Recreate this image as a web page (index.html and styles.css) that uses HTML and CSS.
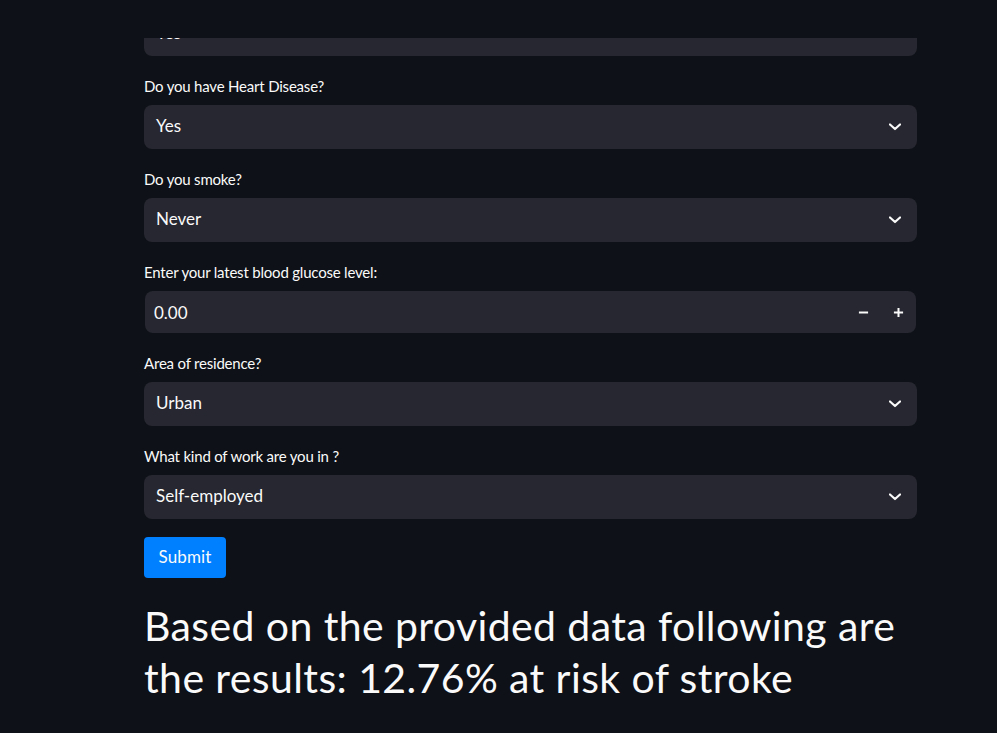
FILE: index.html
```html
<!DOCTYPE html>
<html>
<head>
<meta charset="utf-8">
<link rel="stylesheet" href="styles.css">
</head>
<body>
<div class="topbar"></div>
<main class="main">
  <div class="widget first">
    <div class="select"><span>Yes</span><svg class="chev" viewBox="0 0 12 8"><path d="M1 1.5 L6 6 L11 1.5" /></svg></div>
  </div>
  <div class="widget">
    <label class="label">Do you have Heart Disease?</label>
    <div class="select"><span>Yes</span><svg class="chev" viewBox="0 0 12 8"><path d="M1 1.5 L6 6 L11 1.5" /></svg></div>
  </div>
  <div class="widget">
    <label class="label">Do you smoke?</label>
    <div class="select"><span>Never</span><svg class="chev" viewBox="0 0 12 8"><path d="M1 1.5 L6 6 L11 1.5" /></svg></div>
  </div>
  <div class="widget">
    <label class="label">Enter your latest blood glucose level:</label>
    <div class="number">
      <span class="num-value">0.00</span>
      <div class="steps">
        <button class="step"><svg viewBox="0 0 12 12"><path d="M1 6 H11" /></svg></button>
        <button class="step"><svg viewBox="0 0 12 12"><path d="M1 6 H11 M6 1 V11" /></svg></button>
      </div>
    </div>
  </div>
  <div class="widget">
    <label class="label">Area of residence?</label>
    <div class="select"><span>Urban</span><svg class="chev" viewBox="0 0 12 8"><path d="M1 1.5 L6 6 L11 1.5" /></svg></div>
  </div>
  <div class="widget last">
    <label class="label">What kind of work are you in ?</label>
    <div class="select"><span>Self-employed</span><svg class="chev" viewBox="0 0 12 8"><path d="M1 1.5 L6 6 L11 1.5" /></svg></div>
  </div>
  <button class="submit">Submit</button>
  <h1 class="result">Based on the provided data following are the results: 12.76% at risk of stroke</h1>
</main>
</body>
</html>
```

FILE: styles.css
```css
* { box-sizing: border-box; }
html, body {
  margin: 0;
  padding: 0;
  background: #0e1117;
  color: #fafafa;
  font-family: "Lato", "Noto Sans", sans-serif;
  height: 733px;
  overflow: hidden;
}
.topbar {
  position: fixed;
  top: 0;
  left: 0;
  right: 0;
  height: 38px;
  background: #0e1117;
  z-index: 5;
}
.main {
  width: 773px;
  margin-left: 144px;
  padding-top: 12px;
  display: flex;
  flex-direction: column;
}
.widget {
  display: flex;
  flex-direction: column;
  margin-bottom: 16px;
}
.widget.last { margin-bottom: 18px; }
.label {
  font-size: 15px;
  letter-spacing: -0.2px;
  line-height: 22px;
  height: 25px;
  padding-top: 3px;
  margin-bottom: 8px;
  color: #fafafa;
}
.select {
  height: 44px;
  background: #262730;
  border-radius: 8px;
  display: flex;
  align-items: center;
  justify-content: space-between;
  padding: 0 16px 3px 12px;
  font-size: 17px;
  letter-spacing: 0;
}
.chev {
  width: 12px;
  height: 8px;
  margin-top: 2px;
  fill: none;
  stroke: #fafafa;
  stroke-width: 2.2;
  stroke-linecap: round;
  stroke-linejoin: round;
}
.number {
  height: 42px;
  margin: 0 1px;
  background: #262730;
  border-radius: 8px;
  display: flex;
  align-items: center;
  justify-content: space-between;
  padding-left: 9px;
  font-size: 17px;
}
.steps { display: flex; height: 100%; }
.step {
  width: 35px;
  height: 100%;
  background: transparent;
  border: none;
  display: flex;
  align-items: center;
  justify-content: center;
  padding: 0;
}
.step svg {
  width: 11px;
  height: 11px;
  fill: none;
  stroke: #fafafa;
  stroke-width: 2.2;
}
.submit {
  align-self: flex-start;
  width: 82px;
  height: 41px;
  background: #0080ff;
  border: none;
  border-radius: 4px;
  color: #fafafa;
  font-family: inherit;
  font-size: 17px;
  letter-spacing: 0.1px;
  padding: 0 0 2px 0;
}
.result {
  margin: 22px 0 0 0;
  font-weight: 400;
  font-size: 41px;
  letter-spacing: 0.4px;
  line-height: 52px;
  color: #fafafa;
}
```
